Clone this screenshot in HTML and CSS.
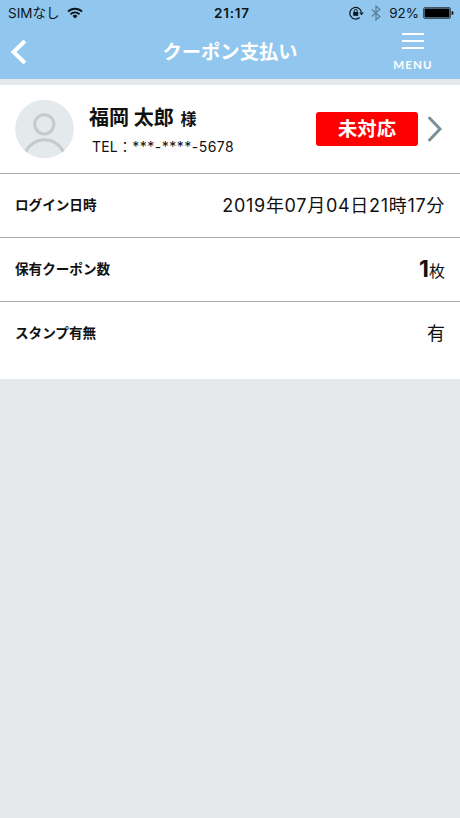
FILE: index.html
```
<!DOCTYPE html>
<html lang="ja">
<head>
    <meta charset="UTF-8">
    <meta name="viewport" content="width=device-width, initial-scale=1.0">
    <title>クーポン支払い</title>
    <link rel="stylesheet" href="styles.css">
</head>
<body>
    <header class="header">
        <div class="status-bar">
            <div class="status-left">
                <span class="carrier">SIMなし</span>
                <svg class="wifi" width="16" height="12" viewBox="0 0 16 12">
                    <g fill="none" stroke="#0b141b" stroke-width="1.9">
                        <path d="M1 4.6a10 10 0 0 1 14 0"/>
                        <path d="M3.5 7.2a6.4 6.4 0 0 1 9 0"/>
                    </g>
                    <path d="M8 11.6L5.5 9a3.5 3.5 0 0 1 5 0z" fill="#0b141b"/>
                </svg>
            </div>
            <span class="time">21:17</span>
            <div class="status-right">
                <svg class="lock" width="15" height="14" viewBox="0 0 15 14">
                    <path d="M10.6 11.5A5.8 5.8 0 1 1 12.4 6.5" fill="none" stroke="#0b141b" stroke-width="1.2"/>
                    <path d="M10.2 6.4h4.6l-2.3 2.9z" fill="#0b141b"/>
                    <rect x="4.2" y="6" width="5" height="3.8" fill="#0b141b"/>
                    <path d="M5.2 6V4.9a1.5 1.5 0 0 1 3 0V6" fill="none" stroke="#0b141b"/>
                </svg>
                <svg class="bluetooth" width="10" height="16" viewBox="0 0 10 16">
                    <path d="M.8 4.4l8 7L5 14.8V1.2l3.8 3.4-8 7" fill="none" stroke="#5c7f98" stroke-width="1.3"/>
                </svg>
                <span class="percent">92%</span>
                <svg class="battery" width="31" height="12" viewBox="0 0 31 12">
                    <rect x=".5" y=".5" width="27" height="11" rx="1.5" fill="none" stroke="#3e5666"/>
                    <rect x="1.5" y="1.5" width="25" height="9" fill="#000"/>
                    <path d="M28.6 4a2 2 0 0 1 0 4z" fill="#0b141b"/>
                </svg>
            </div>
        </div>
        <div class="nav">
            <a class="back" href="#">
                <svg width="18" height="27" viewBox="0 0 18 27">
                    <path d="M15 2L3.5 13 15 24" fill="none" stroke="#fff" stroke-width="4"/>
                </svg>
            </a>
            <h1 class="title">クーポン支払い</h1>
            <a class="menu" href="#">
                <span class="menu-line"></span>
                <span class="menu-line"></span>
                <span class="menu-line"></span>
                <span class="menu-text">MENU</span>
            </a>
        </div>
    </header>

    <main class="card">
        <section class="customer">
            <svg class="avatar" width="60" height="60" viewBox="0 0 60 60">
                <circle cx="29.5" cy="30" r="29.3" fill="#e4e9ec"/>
                <g fill="none" stroke="#c5cacd" stroke-width="3">
                    <circle cx="29.3" cy="25.3" r="9.6"/>
                    <path d="M10.8 52.5a20.8 20.8 0 0 1 37.4 0"/>
                </g>
            </svg>
            <div class="profile">
                <div class="name">福岡 太郎 <span class="suffix">様</span></div>
                <div class="tel"><span class="tel-label">TEL：</span>***-****-5678</div>
            </div>
            <span class="badge">未対応</span>
            <svg class="arrow" width="16" height="28" viewBox="0 0 16 28">
                <path d="M2.5 3L13 14 2.5 25" fill="none" stroke="#7b8f98" stroke-width="3" stroke-linecap="round"/>
            </svg>
        </section>
        <dl class="details">
            <div class="row">
                <dt>ログイン日時</dt>
                <dd class="date">2019年07月04日21時17分</dd>
            </div>
            <div class="row">
                <dt>保有クーポン数</dt>
                <dd class="count"><b>1</b>枚</dd>
            </div>
            <div class="row last">
                <dt>スタンプ有無</dt>
                <dd>有</dd>
            </div>
        </dl>
    </main>
</body>
</html>
```
FILE: styles.css
```
* {
    box-sizing: border-box;
}
body {
    margin: 0;
    min-height: 100vh;
    background: #e5e9ec;
    color: #111;
    font-family: Inter, "Noto Sans CJK JP", sans-serif;
}
a {
    color: inherit;
    text-decoration: none;
}
svg {
    display: block;
    flex-shrink: 0;
}
/* Header */
.header {
    height: 79px;
    background: #91c7ee;
}
.status-bar {
    display: grid;
    grid-template-columns: 1fr auto 1fr;
    align-items: center;
    height: 26px;
    padding: 0 6px 0 8px;
    color: #0b141b;
    font-size: 13.5px;
    line-height: 26px;
}
.status-left,
.status-right {
    display: flex;
    align-items: center;
}
.status-left {
    gap: 8px;
}
.status-right {
    justify-content: flex-end;
}
.time {
    padding-left: 2px;
    font-weight: 600;
    letter-spacing: 0.8px;
}
.bluetooth {
    margin: 0 8px 0 7px;
}
.battery {
    margin-left: 4px;
}
.nav {
    display: grid;
    grid-template-columns: 60px 1fr 60px;
    height: 53px;
    padding: 0 17px 0 10px;
    color: #fff;
}
.back {
    padding-top: 13px;
}
.title {
    margin: 0;
    padding-left: 7px;
    text-align: center;
    font-size: 19.3px;
    font-weight: bold;
    line-height: 53px;
}
.menu {
    display: flex;
    flex-direction: column;
    align-items: center;
    gap: 5px;
    padding-top: 7px;
}
.menu-line {
    width: 22px;
    height: 2px;
    background: #fff;
}
.menu-text {
    margin-top: 4px;
    font-family: Lato, sans-serif;
    font-size: 11.5px;
    font-weight: bold;
    line-height: 14px;
    letter-spacing: 1.1px;
}
/* Customer */
.card {
    height: 294px;
    margin-top: 6px;
    background: #fff;
}
.customer {
    display: flex;
    align-items: center;
    height: 89px;
    padding: 0 17px 0 15px;
    border-bottom: 1px solid #aaa;
}
.profile {
    flex: 1;
    margin-left: 14px;
    padding-top: 4px;
}
.name {
    font-size: 20px;
    font-weight: bold;
    line-height: 30px;
}
.suffix {
    margin-left: 2px;
    font-size: 16px;
}
.tel {
    padding-left: 3px;
    font-size: 14px;
    line-height: 26px;
    letter-spacing: 0.5px;
}
.tel-label {
    letter-spacing: 0.2px;
}
.badge {
    width: 102px;
    height: 34px;
    border-radius: 3px;
    background: #fe0000;
    color: #fff;
    text-align: center;
    font-size: 19.3px;
    font-weight: bold;
    line-height: 35px;
}
.arrow {
    margin-left: 9px;
}
/* Details */
.details {
    margin: 0;
}
.row {
    display: flex;
    align-items: center;
    justify-content: space-between;
    height: 64px;
    padding: 0 15px 4px;
    border-bottom: 1px solid #aaa;
}
.row.last {
    border-bottom: none;
}
.row dt {
    font-size: 13.6px;
    font-weight: bold;
}
.row dd {
    margin: 0;
    font-size: 18px;
}
.row .date {
    letter-spacing: 0.7px;
}
.row .count {
    padding-top: 2px;
    font-size: 16px;
}
.count b {
    font-size: 23px;
}
```
